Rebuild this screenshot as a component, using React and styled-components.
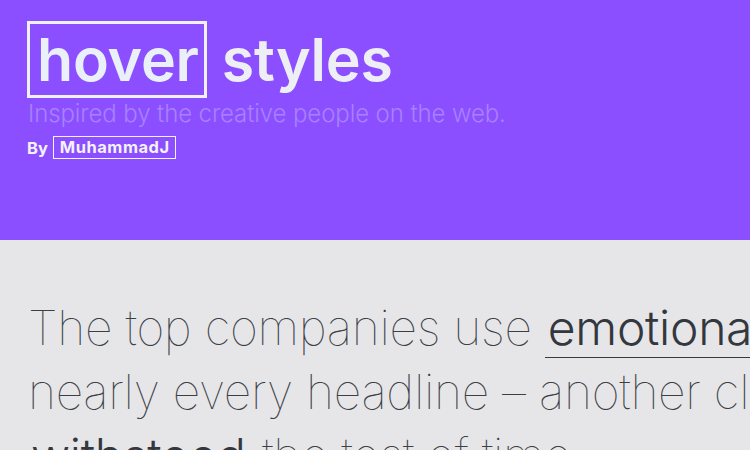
import React from "react";
import styled, { createGlobalStyle } from "styled-components";

const Global = createGlobalStyle`
  html, body { margin: 0; padding: 0; }
  body {
    background: #e6e6e8;
    color: #3b4046;
    font-family: Inter, "Noto Sans", sans-serif;
    overflow: hidden;
  }
`;

const Page = styled.div`
  width: 750px;
  height: 450px;
  overflow: hidden;
`;

const Header = styled.header`
  height: 240px;
  box-sizing: border-box;
  background: #8c4fff;
  padding: 21px 0 0 27px;
  display: flex;
  flex-direction: column;
`;

const Title = styled.h1`
  margin: 0;
  display: flex;
  align-items: center;
  gap: 15px;
  font-family: Inter, sans-serif;
  font-weight: 600;
  font-size: 59px;
  letter-spacing: -0.2px;
  color: #eeeff4;
  line-height: 71px;
`;

const Boxed = styled.span`
  display: inline-block;
  border: 3px solid #eef2f8;
  padding: 0 5px 0 7px;
  color: #eaf0f8;
`;

const Subtitle = styled.p`
  margin: 1px 0 0 1px;
  font-family: Inter, sans-serif;
  font-weight: 300;
  font-size: 24px;
  line-height: 30px;
  color: #a781ff;
  letter-spacing: -0.1px;
`;

const Byline = styled.div`
  margin-top: 7px;
  display: flex;
  align-items: center;
  gap: 5px;
  font-family: Inter, sans-serif;
  font-weight: 700;
  font-size: 16.5px;
  color: #f2f2f8;
`;

const Author = styled.span`
  border: 1px solid #f2f2f8;
  padding: 0 5px 1px 6px;
  line-height: 20px;
  letter-spacing: 0.5px;
`;

const Content = styled.main`
  padding: 56px 0 0 28px;
`;

const Lead = styled.p`
  margin: 0;
  white-space: nowrap;
  font-family: Inter, sans-serif;
  font-weight: 100;
  font-size: 48px;
  line-height: 64px;
  letter-spacing: -0.3px;
  color: #3b4046;
`;

const Emph = styled.span`
  font-weight: 300;
  color: #33383e;
  border-bottom: 1px solid #363b41;
  padding: 0 3px;
`;

export default function App() {
  return (
    <Page>
      <Global />
      <Header>
        <Title>
          <Boxed>hover</Boxed>
          <span>styles</span>
        </Title>
        <Subtitle>Inspired by the creative people on the web.</Subtitle>
        <Byline>
          <span>By</span>
          <Author>MuhammadJ</Author>
        </Byline>
      </Header>
      <Content>
        <Lead>
          The top companies use <Emph>emotional</Emph> words in
          <br />
          nearly every headline – another classic technique that has
          <br />
          <Emph>withstood</Emph> the test of time.
        </Lead>
      </Content>
    </Page>
  );
}
